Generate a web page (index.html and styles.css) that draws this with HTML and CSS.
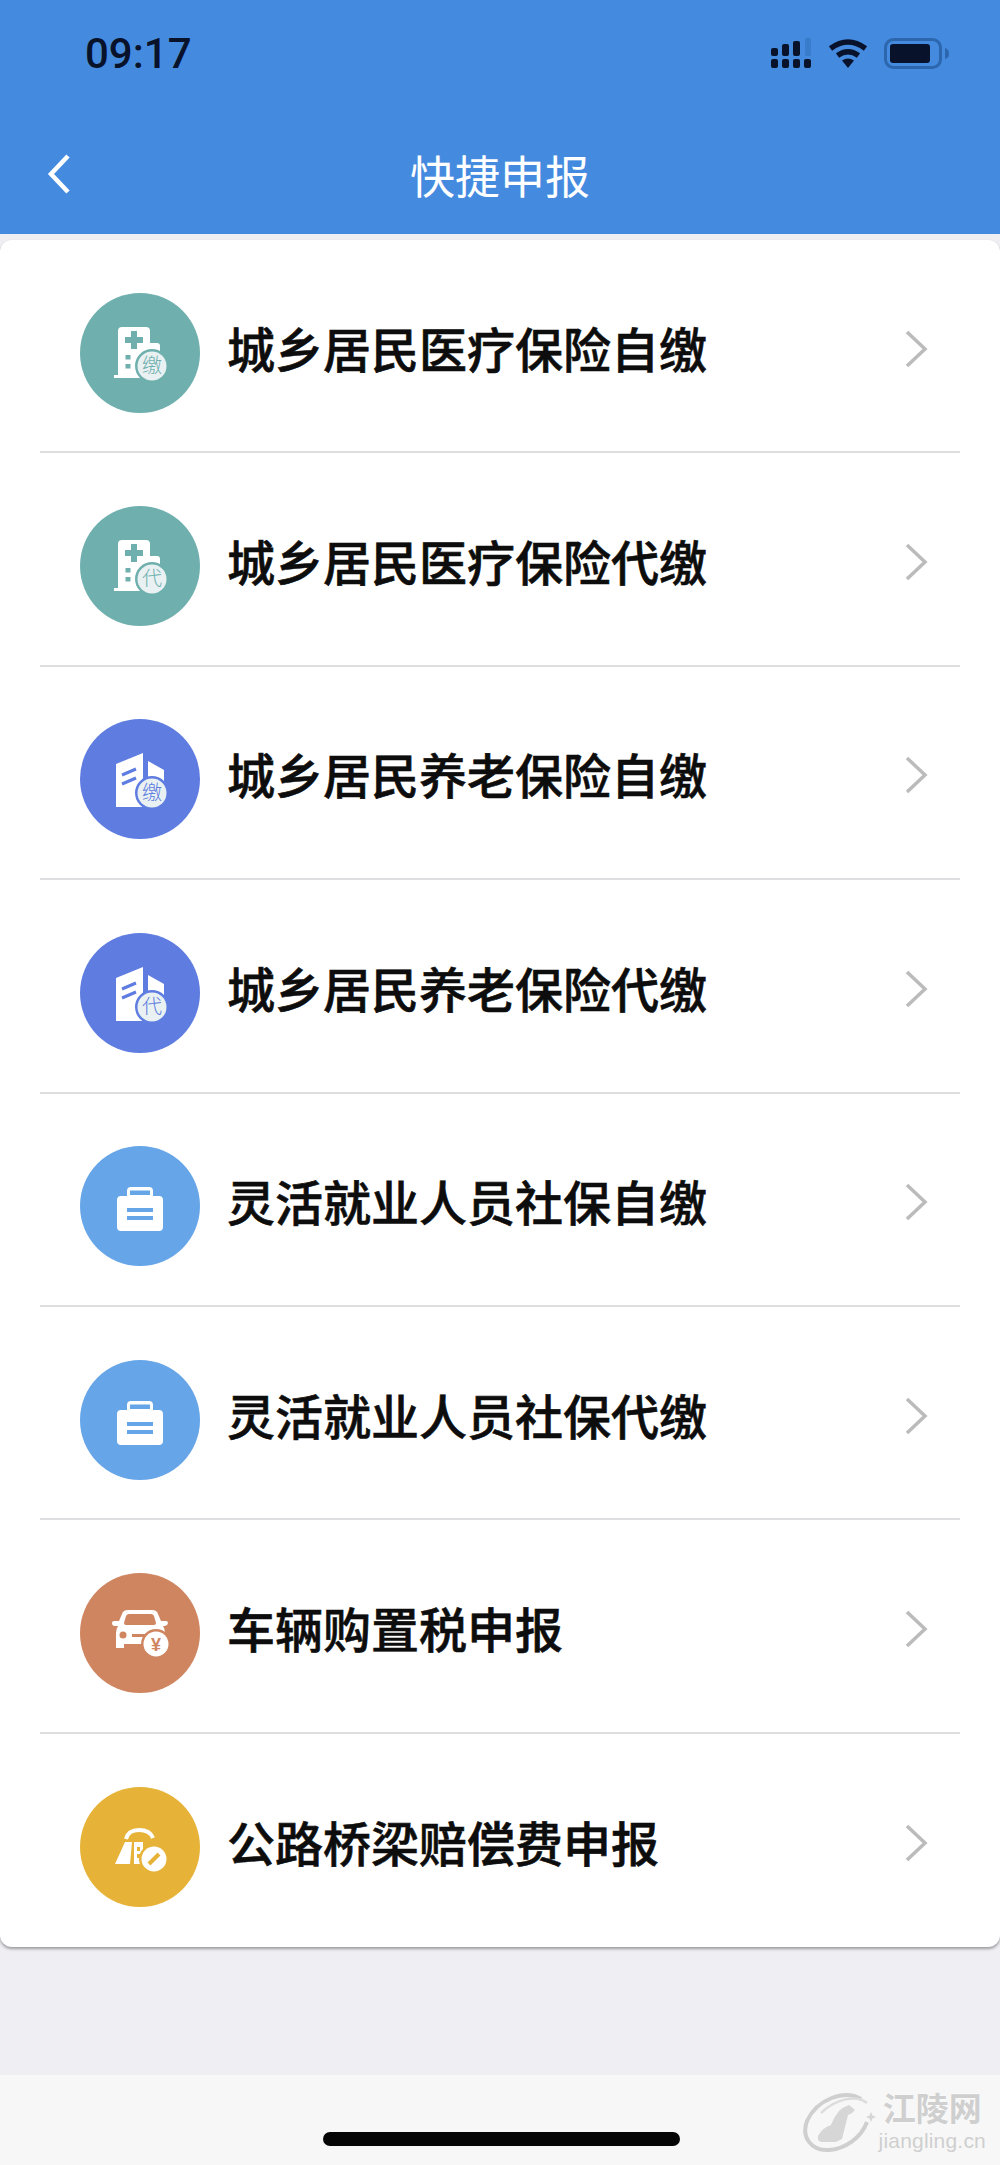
FILE: index.html
```html
<!DOCTYPE html>
<html lang="zh-CN">
<head>
    <meta charset="UTF-8">
    <meta name="viewport" content="width=device-width, initial-scale=1.0">
    <title>快捷申报</title>
    <link rel="stylesheet" href="styles.css">
</head>
<body>

<svg class="defs" width="0" height="0">
    <symbol id="hospital" viewBox="0 0 120 120">
        <path fill="#fff" d="M38 82V38q0-4 4-4h24q4 0 4 4v12h7q3 0 3 3v12H70v20H34v-3z"/>
        <path fill="currentColor" d="M51 38h6v6h6v6h-6v6h-6v-6h-6v-6h6zM45.500 62h5v4.500h-5zM45.500 71h5v4.500h-5z"/>
    </symbol>
    <symbol id="building" viewBox="0 0 120 120">
        <path fill="#fff" d="M36 45 63 34v54H36zM68 42l16 9v30H68z"/>
        <path fill="none" stroke="currentColor" stroke-width="3" d="M42 56l14-6M42 65l14-6"/>
    </symbol>
    <symbol id="briefcase" viewBox="0 0 120 120">
        <path fill="#fff" d="M47 50v-5q0-4 4-4h18q4 0 4 4v5h6q4 0 4 4v27q0 4-4 4H41q-4 0-4-4V54q0-4 4-4z"/>
        <path fill="currentColor" d="M50 44.500h20V49H50zM47 62h26v4H47zM47 70h26v4H47z"/>
    </symbol>
    <symbol id="car" viewBox="0 0 120 120">
        <path fill="#fff" d="M32 50q0-2 2-2h5l3-7q1-4 6-4h24q5 0 6 4l3 7h5q2 0 2 2t-3 3h-2q2 3 2 7v15h-8v-4H44v4h-8V60q0-4 2-7h-3q-3 0-3-3z"/>
        <path fill="currentColor" d="M46 43q1-2 3-2h22q2 0 3 2l2 7q0 2-2 2H46q-2 0-2-2z"/>
        <circle fill="currentColor" cx="43" cy="62" r="3.500"/>
        <path fill="currentColor" d="M52 61h14v3H52z"/>
    </symbol>
    <symbol id="bridge" viewBox="0 0 120 120">
        <path fill="none" stroke="#fff" stroke-width="4" d="M46 52q2-9 13-9t14 8"/>
        <path fill="#fff" d="M45 55h7l-2 22H35zM54 55h9v8h2v14H54z"/>
        <path fill="currentColor" d="M57 60h3v4h-3zM57 67h3v4h-3z"/>
    </symbol>
</svg>

<div class="page">
    <!-- Header -->
    <header class="header">
        <div class="status-bar">
            <span class="time">09:17</span>
            <div class="status-icons">
                <svg class="signal" viewBox="0 0 42 31" width="42" height="31">
                    <rect x="35" y="0" width="6" height="18" rx="1" fill="#3a7ccc"/>
                    <rect x="1" y="10" width="7" height="8" rx="2" fill="#08122a"/>
                    <rect x="12" y="6" width="7" height="12" rx="2" fill="#08122a"/>
                    <rect x="23" y="3" width="7" height="15" rx="2" fill="#08122a"/>
                    <rect x="1" y="21" width="7" height="9" rx="2" fill="#08122a"/>
                    <rect x="12" y="21" width="7" height="9" rx="2" fill="#08122a"/>
                    <rect x="23" y="21" width="7" height="9" rx="2" fill="#08122a"/>
                    <rect x="34" y="21" width="7" height="9" rx="2" fill="#08122a"/>
                </svg>
                <svg class="wifi" viewBox="0 0 40 30" width="40" height="30">
                    <path fill="none" stroke="#08122a" stroke-width="5.500" d="M2.500 10.500q17.500-13 35 0M9.500 17.500q10.500-7.500 21 0"/>
                    <path fill="#08122a" d="M14 22.500q6-4 12 0l-6 7.500z"/>
                </svg>
                <svg class="battery" viewBox="0 0 66 31" width="66" height="31">
                    <rect x="1.500" y="1.500" width="55" height="28" rx="8" fill="none" stroke="#2c66ad" stroke-width="3"/>
                    <rect x="6" y="6" width="40" height="19" rx="3" fill="#08122a"/>
                    <path fill="#2c66ad" d="M61 10q4 1 4 5.500t-4 5.500z"/>
                </svg>
            </div>
        </div>
        <div class="nav-bar">
            <svg class="back" viewBox="0 0 24 40" width="24" height="40">
                <path fill="none" stroke="#fff" stroke-width="4.500" d="M21 2 4 20l17 18"/>
            </svg>
            <h1 class="title">快捷申报</h1>
        </div>
    </header>

    <!-- Daftar -->
    <main class="content">
        <div class="card">
            <a class="row">
                <svg class="icon teal" viewBox="0 0 120 120"><use href="#hospital"/><circle class="badge-gap" cx="72" cy="73" r="17"/><circle class="badge-face" cx="72" cy="73" r="14.500"/><text class="badge-text" x="72" y="80">缴</text></svg>
                <span class="label">城乡居民医疗保险自缴</span>
                <svg class="chevron" viewBox="0 0 24 38" width="24" height="38"><path d="M3 2l18 17L3 36"/></svg>
            </a>
            <a class="row">
                <svg class="icon teal" viewBox="0 0 120 120"><use href="#hospital"/><circle class="badge-gap" cx="72" cy="73" r="17"/><circle class="badge-face" cx="72" cy="73" r="14.500"/><text class="badge-text" x="72" y="80">代</text></svg>
                <span class="label">城乡居民医疗保险代缴</span>
                <svg class="chevron" viewBox="0 0 24 38" width="24" height="38"><path d="M3 2l18 17L3 36"/></svg>
            </a>
            <a class="row">
                <svg class="icon indigo" viewBox="0 0 120 120"><use href="#building"/><circle class="badge-gap" cx="72" cy="74" r="17"/><circle class="badge-face" cx="72" cy="74" r="14.500"/><text class="badge-text" x="72" y="81">缴</text></svg>
                <span class="label">城乡居民养老保险自缴</span>
                <svg class="chevron" viewBox="0 0 24 38" width="24" height="38"><path d="M3 2l18 17L3 36"/></svg>
            </a>
            <a class="row">
                <svg class="icon indigo" viewBox="0 0 120 120"><use href="#building"/><circle class="badge-gap" cx="72" cy="74" r="17"/><circle class="badge-face" cx="72" cy="74" r="14.500"/><text class="badge-text" x="72" y="81">代</text></svg>
                <span class="label">城乡居民养老保险代缴</span>
                <svg class="chevron" viewBox="0 0 24 38" width="24" height="38"><path d="M3 2l18 17L3 36"/></svg>
            </a>
            <a class="row">
                <svg class="icon sky" viewBox="0 0 120 120"><use href="#briefcase"/></svg>
                <span class="label">灵活就业人员社保自缴</span>
                <svg class="chevron" viewBox="0 0 24 38" width="24" height="38"><path d="M3 2l18 17L3 36"/></svg>
            </a>
            <a class="row">
                <svg class="icon sky" viewBox="0 0 120 120"><use href="#briefcase"/></svg>
                <span class="label">灵活就业人员社保代缴</span>
                <svg class="chevron" viewBox="0 0 24 38" width="24" height="38"><path d="M3 2l18 17L3 36"/></svg>
            </a>
            <a class="row">
                <svg class="icon orange" viewBox="0 0 120 120"><use href="#car"/><circle class="badge-gap" cx="76" cy="71" r="15"/><circle class="badge-solid" cx="76" cy="71" r="12.500"/><text class="badge-yen" x="76" y="77.500">¥</text></svg>
                <span class="label">车辆购置税申报</span>
                <svg class="chevron" viewBox="0 0 24 38" width="24" height="38"><path d="M3 2l18 17L3 36"/></svg>
            </a>
            <a class="row">
                <svg class="icon yellow" viewBox="0 0 120 120"><use href="#bridge"/><circle class="badge-gap" cx="74" cy="72" r="15"/><circle class="badge-solid" cx="74" cy="72" r="12.500"/><path class="badge-bar" d="M69 77l10-10"/></svg>
                <span class="label">公路桥梁赔偿费申报</span>
                <svg class="chevron" viewBox="0 0 24 38" width="24" height="38"><path d="M3 2l18 17L3 36"/></svg>
            </a>
        </div>
    </main>

    <footer class="footer">
        <div class="home-indicator"></div>
        <div class="watermark">
            <svg class="wm-logo" viewBox="0 0 76 62" width="76" height="62">
                <path fill="none" stroke="#cfcfcf" stroke-width="4" d="M60 8C44-2 16 8 6 30c-6 16 4 30 22 29 16-1 32-12 38-28"/>
                <path fill="none" stroke="#dcdcdc" stroke-width="2.500" d="M66 12C56 3 34 8 20 22"/>
                <path fill="#d6d6d6" d="M48 14l6 5-3 3-4 2-3 12-3 12-6 3H20q-4-1-3-6 4-8 13-11 3-8 8-14 4-4 10-6z"/>
                <path fill="#d6d6d6" d="M70 21l1.500 3.500 3.500 1.500-3.500 1.500L70 31l-1.500-3.500L65 26l3.500-1.500z"/>
            </svg>
            <div class="wm-text">
                <span class="wm-name">江陵网</span>
                <span class="wm-url">jiangling.cn</span>
            </div>
        </div>
    </footer>
</div>

</body>
</html>
```

FILE: styles.css
```css
body {
    margin: 0;
    font-family: "Noto Sans CJK SC", "Liberation Sans", sans-serif;
    background-color: #eeeef3;
}
.defs {
    display: block;
    height: 0;
}
.page {
    display: flex;
    flex-direction: column;
    height: 2165px;
    position: relative;
    overflow: hidden;
}
.header {
    height: 234px;
    flex: none;
    box-sizing: border-box;
    background-color: #448be0;
}
.status-bar {
    display: flex;
    justify-content: space-between;
    align-items: center;
    height: 32px;
    padding: 37px 50px 0 85px;
}
.time {
    font-family: Roboto, sans-serif;
    font-size: 42px;
    font-weight: 500;
    color: #08122a;
}
.status-icons {
    display: flex;
    align-items: center;
    gap: 16px;
}
.nav-bar {
    display: flex;
    align-items: center;
    justify-content: center;
    position: relative;
    margin-top: 75px;
    height: 60px;
}
.back {
    position: absolute;
    left: 47px;
    top: 10px;
}
.title {
    margin: 0;
    font-size: 45px;
    font-weight: 400;
    color: #fff;
}
.content {
    flex: 1;
    padding-top: 6px;
}
.card {
    display: grid;
    grid-template-rows: repeat(8, 1fr);
    height: 1707px;
    box-sizing: border-box;
    padding: 0 40px;
    background-color: #fff;
    border-radius: 12px;
    box-shadow: 0 2px 3px rgba(0, 0, 0, 0.35);
}
.row {
    display: flex;
    align-items: center;
    box-sizing: border-box;
    padding-top: 14px;
    border-bottom: 2px solid #dedee0;
}
.row:last-child {
    border-bottom: none;
}
.icon {
    width: 120px;
    height: 120px;
    flex: none;
    margin-left: 40px;
    border-radius: 50%;
}
.teal {
    color: #6fb0ae;
    background-color: #6fb0ae;
}
.indigo {
    color: #5f7de0;
    background-color: #5f7de0;
}
.sky {
    color: #66a5e8;
    background-color: #66a5e8;
}
.orange {
    color: #cf8560;
    background-color: #cf8560;
}
.yellow {
    color: #e6b338;
    background-color: #e6b338;
}
.badge-gap {
    fill: currentColor;
}
.badge-face {
    fill: #e9f1f3;
}
.badge-solid {
    fill: #fff;
}
.badge-text {
    font-size: 20px;
    font-weight: 300;
    text-anchor: middle;
    fill: currentColor;
}
.badge-yen {
    font-family: "Liberation Sans", sans-serif;
    font-size: 18px;
    font-weight: 700;
    text-anchor: middle;
    fill: currentColor;
}
.badge-bar {
    fill: none;
    stroke: currentColor;
    stroke-width: 4;
}
.label {
    flex: 1;
    margin: 0 0 12px 27px;
    font-size: 48px;
    font-weight: 500;
    -webkit-text-stroke: 0.6px #0d0d0d;
    color: #0d0d0d;
}
.chevron {
    flex: none;
    margin: 0 32px 8px 0;
}
.chevron path {
    fill: none;
    stroke: #bbb;
    stroke-width: 3.500;
}
.footer {
    height: 90px;
    flex: none;
    box-sizing: border-box;
    padding-top: 57px;
    background-color: #f7f7f7;
}
.home-indicator {
    width: 357px;
    height: 14px;
    margin-left: 323px;
    border-radius: 7px;
    background-color: #050505;
}
.watermark {
    display: flex;
    align-items: center;
    position: absolute;
    right: 14px;
    bottom: 12px;
}
.wm-text {
    display: flex;
    flex-direction: column;
    align-items: center;
    margin-left: 2px;
}
.wm-name {
    font-family: "Liberation Sans", "Noto Sans CJK SC", sans-serif;
    font-size: 33px;
    font-weight: 700;
    line-height: 38px;
    color: #cfcfcf;
    text-shadow: 0 0 2px #fff;
}
.wm-url {
    font-family: "Liberation Sans", sans-serif;
    font-size: 21px;
    line-height: 24px;
    color: #cfcfcf;
    letter-spacing: 0.2px;
}
```
